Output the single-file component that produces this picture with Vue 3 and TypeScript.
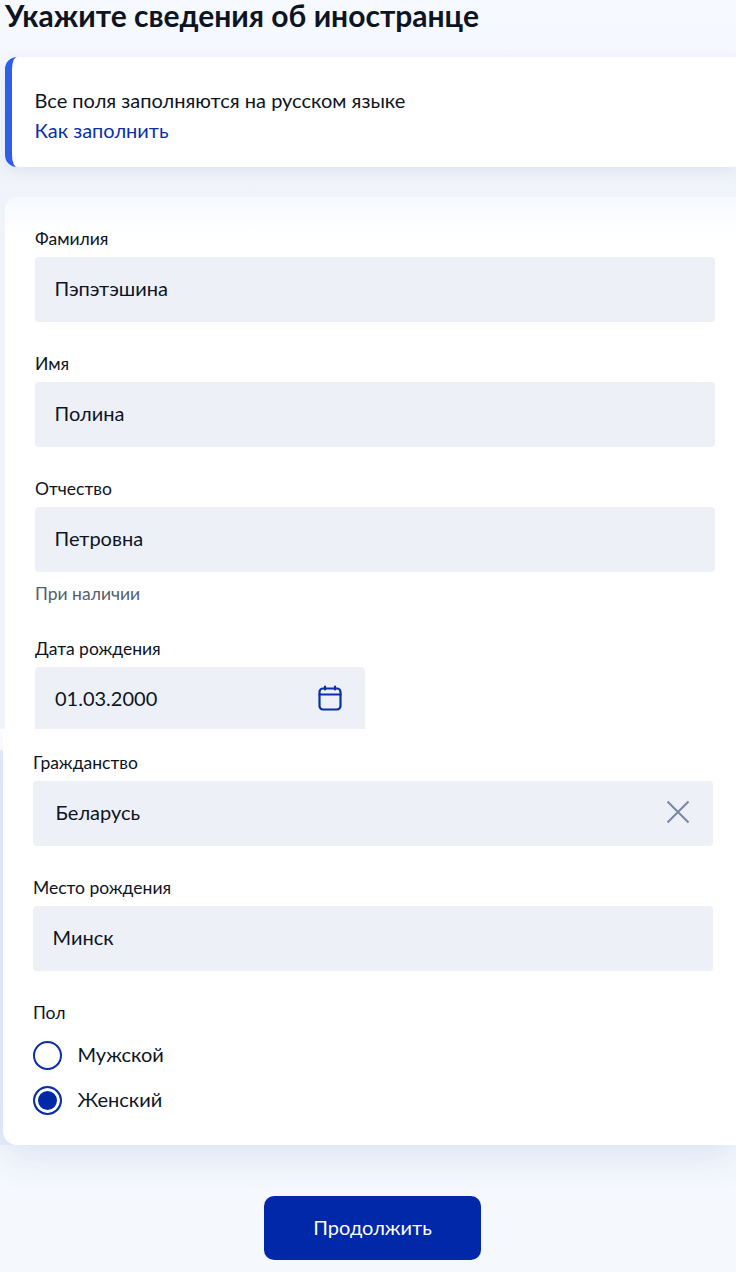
<script setup lang="ts">
const upper = [
  { label: 'Фамилия', value: 'Пэпэтэшина' },
  { label: 'Имя', value: 'Полина' },
  { label: 'Отчество', value: 'Петровна', hint: 'При наличии' },
]
const genders = [
  { label: 'Мужской', checked: false },
  { label: 'Женский', checked: true },
]
</script>

<template>
  <main class="page">
    <h1 class="title">Укажите сведения об иностранце</h1>

    <section class="notice">
      <p class="notice-text">Все поля заполняются на русском языке</p>
      <a class="notice-link">Как заполнить</a>
    </section>

    <section class="card card-top">
      <div v-for="f in upper" :key="f.label" class="field">
        <div class="label">{{ f.label }}</div>
        <div class="input">{{ f.value }}</div>
        <div v-if="f.hint" class="hint">{{ f.hint }}</div>
      </div>
      <div class="field field-date">
        <div class="label">Дата рождения</div>
        <div class="input input-date">
          <span>01.03.2000</span>
          <svg class="icon-cal" width="24" height="26" viewBox="0 0 24 26" fill="none" stroke="#0b2fa5" stroke-width="2.2" stroke-linecap="round" stroke-linejoin="round">
            <rect x="1.5" y="3.5" width="21" height="21" rx="3.5" />
            <path d="M1.5 9.5H22.5M7 1.5V4.5M17 1.5V4.5" />
          </svg>
        </div>
      </div>
    </section>

    <div class="seam">
      <section class="card card-bottom">
        <div class="field">
          <div class="label">Гражданство</div>
          <div class="input input-clear">
            <span>Беларусь</span>
            <svg width="24" height="24" viewBox="0 0 24 24" fill="none" stroke="#7a85a3" stroke-width="2">
              <path d="M1.5 1.5L22.5 22.5M22.5 1.5L1.5 22.5" />
            </svg>
          </div>
        </div>
        <div class="field">
          <div class="label">Место рождения</div>
          <div class="input">Минск</div>
        </div>
        <div class="label gender-label">Пол</div>
        <div class="radios">
          <label v-for="g in genders" :key="g.label" class="radio">
            <span class="radio-mark" :class="{ on: g.checked }"></span>
            <span class="radio-text">{{ g.label }}</span>
          </label>
        </div>
      </section>
    </div>

    <div class="actions">
      <button class="primary" type="button">Продолжить</button>
    </div>
  </main>
</template>

<style>
html, body { margin: 0; background: #f5f8fd; }
</style>

<style scoped>
.page {
  position: relative;
  width: 736px;
  height: 1272px;
  overflow: hidden;
  box-sizing: border-box;
  font-family: Lato, "Noto Sans", sans-serif;
  color: #0d1424;
  background:
    linear-gradient(180deg, #f6f9fe 0, #f0f3fa 190px, #eff3fa 729px),
    #f5f8fd;
  background-size: 100% 729px;
  background-repeat: no-repeat;
}
.title {
  margin: 0;
  padding-left: 5px;
  height: 57px;
  box-sizing: border-box;
  font-size: 30px;
  line-height: 30px;
  font-weight: 700;
  color: #0d1424;
}
.notice {
  margin-left: 5px;
  height: 110px;
  box-sizing: border-box;
  padding: 31px 30px 0 22.5px;
  background: #fff;
  border-left: 7px solid #2f5fe8;
  border-radius: 12px 0 0 12px;
  box-shadow: 0 4px 14px rgba(60, 90, 160, 0.1);
}
.notice-text {
  margin: 0;
  font-size: 20px;
  line-height: 24px;
}
.notice-link {
  display: block;
  margin-top: 6px;
  font-size: 20px;
  line-height: 24px;
  color: #0b2fa5;
}
.card {
  background: #fff;
}
.card-top {
  margin: 30px 0 0 5px;
  height: 532px;
  overflow: hidden;
  box-sizing: border-box;
  padding: 32px 21px 0 30px;
  border-radius: 12px 0 0 0;
  background: linear-gradient(180deg, #f7f9fe 0, #fff 40px);
}
.field {
  padding-bottom: 32px;
}
.field:has(.hint) {
  padding-bottom: 35px;
}
.label {
  font-size: 17.5px;
  line-height: 20px;
  height: 28px;
  color: #0d1424;
}
.input {
  height: 65px;
  box-sizing: border-box;
  padding: 0 20px 3px 19.5px;
  display: flex;
  align-items: center;
  justify-content: space-between;
  border-radius: 4px;
  background: #edf0f7;
  font-size: 20px;
  color: #0d1424;
}
.hint {
  margin-top: 12px;
  font-size: 17.5px;
  line-height: 20px;
  color: #555e6b;
}
.input-date {
  width: 330px;
  padding-left: 20px;
  padding-right: 23px;
}
.icon-cal {
  flex: none;
}
.seam {
  background: linear-gradient(180deg, #fff 0, #fff 21px, #eaf0fa 21px);
  background-size: 100% 416px;
  background-repeat: no-repeat;
  padding-left: 3px;
}
.card-bottom {
  height: 416px;
  box-sizing: border-box;
  padding: 24px 23px 0 30px;
  border-radius: 0 0 0 14px;
  box-shadow: 0 10px 40px rgba(50, 100, 190, 0.14);
  clip-path: inset(0 -60px -60px -60px);
}
.input-clear {
  padding-left: 22.5px;
  padding-right: 23px;
}
.gender-label {
  height: 20px;
}
.radios {
  display: flex;
  flex-direction: column;
  gap: 16px;
  margin-top: 18px;
}
.radio {
  display: flex;
  align-items: center;
  gap: 15.5px;
  height: 29px;
  font-size: 20px;
  color: #0d1424;
}
.radio-text {
  padding-bottom: 3px;
}
.radio-mark {
  width: 29px;
  height: 29px;
  box-sizing: border-box;
  border: 2px solid #0b2fa5;
  border-radius: 50%;
  background: #fff;
  flex: none;
}
.radio-mark.on {
  background: #0028a8;
  box-shadow: inset 0 0 0 3px #fff;
}
.actions {
  display: flex;
  justify-content: flex-start;
  padding: 51px 0 0 264px;
}
.primary {
  width: 217px;
  height: 64px;
  border: 0;
  padding: 0 0 3px;
  border-radius: 10px;
  background: #0028a8;
  color: #fff;
  font-family: inherit;
  font-size: 20px;
}
</style>
